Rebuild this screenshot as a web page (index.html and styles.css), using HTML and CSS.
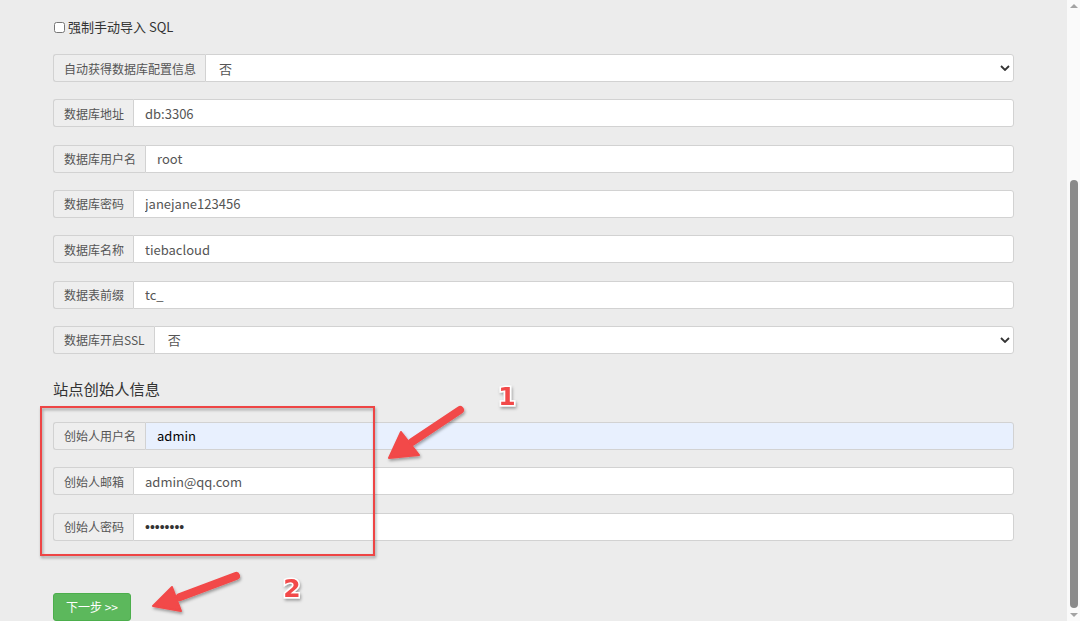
FILE: index.html
```html
<!DOCTYPE html>
<html lang="zh-CN">
<head>
<meta charset="utf-8">
<title>安装</title>
<link rel="stylesheet" href="styles.css">
</head>
<body>
<div class="page">
  <main class="content">
    <label class="check"><input type="checkbox"> 强制手动导入 SQL</label>

    <div class="rows">
      <div class="group">
        <span class="addon">自动获得数据库配置信息</span>
        <select class="field select"><option>否</option></select>
      </div>
      <div class="group">
        <span class="addon">数据库地址</span>
        <input class="field" type="text" value="db:3306">
      </div>
      <div class="group">
        <span class="addon">数据库用户名</span>
        <input class="field" type="text" value="root">
      </div>
      <div class="group">
        <span class="addon">数据库密码</span>
        <input class="field" type="text" value="janejane123456">
      </div>
      <div class="group">
        <span class="addon">数据库名称</span>
        <input class="field" type="text" value="tiebacloud">
      </div>
      <div class="group">
        <span class="addon">数据表前缀</span>
        <input class="field" type="text" value="tc_">
      </div>
      <div class="group">
        <span class="addon">数据库开启SSL</span>
        <select class="field select"><option>否</option></select>
      </div>
    </div>

    <h3 class="heading">站点创始人信息</h3>

    <div class="rows">
      <div class="group">
        <span class="addon">创始人用户名</span>
        <input class="field autofill" type="text" value="admin">
      </div>
      <div class="group">
        <span class="addon">创始人邮箱</span>
        <input class="field" type="text" value="admin@qq.com">
      </div>
      <div class="group">
        <span class="addon">创始人密码</span>
        <input class="field password" type="password" value="12345678">
      </div>
    </div>

    <button class="btn-next" type="button">下一步 &gt;&gt;</button>
  </main>

  <div class="scrollbar">
    <span class="sb-arrow sb-up"></span>
    <span class="sb-space"></span>
    <span class="sb-thumb"></span>
    <span class="sb-arrow sb-down"></span>
  </div>
</div>

<svg class="annot" width="1080" height="621" viewBox="0 0 1080 621" aria-hidden="true">
  <defs>
    <filter id="sh" x="-20%" y="-20%" width="140%" height="140%">
      <feDropShadow dx="1" dy="2" stdDeviation="1.6" flood-color="#000" flood-opacity="0.35"/>
    </filter>
  </defs>
  <rect x="41" y="407" width="333" height="148" fill="none" stroke="#ee4444" stroke-width="2" filter="url(#sh)"/>
  <g filter="url(#sh)" fill="#f24848" stroke="#f24848">
    <line x1="460" y1="410" x2="412" y2="442" stroke-width="8" stroke-linecap="round"/>
    <polygon points="389,458 401,432 419,455" stroke-width="2" stroke-linejoin="round"/>
    <line x1="236" y1="576" x2="180" y2="597" stroke-width="8" stroke-linecap="round"/>
    <polygon points="153,606 172,587 181,611" stroke-width="2" stroke-linejoin="round"/>
  </g>
  <g class="num" filter="url(#sh)">
    <text x="507" y="405">1</text>
    <text x="292" y="597">2</text>
  </g>
</svg>
</body>
</html>
```

FILE: styles.css
```css
html, body {
  margin: 0;
  padding: 0;
  height: 100%;
  overflow: hidden;
}

body {
  background: #ececec;
  font-family: "Noto Sans CJK SC", "Noto Sans", sans-serif;
  color: #333;
  position: relative;
}

.page {
  display: flex;
  height: 621px;
}

.content {
  flex: 1;
  display: flex;
  flex-direction: column;
  align-items: flex-start;
  padding: 17px 53px 0 53px;
  box-sizing: border-box;
  width: 1067px;
}

.check {
  display: flex;
  align-items: center;
  font-size: 13px;
  line-height: 20px;
  color: #333;
  height: 20px;
}

.check input {
  width: 11px;
  height: 11px;
  margin: 0 3px 0 1px;
}

.rows {
  display: flex;
  flex-direction: column;
  gap: 17.33px;
  align-self: stretch;
  width: 961px;
}

.content > .rows:first-of-type {
  margin-top: 17px;
}

.group {
  display: flex;
  height: 28px;
}

.addon {
  display: flex;
  align-items: center;
  padding: 0 9px 0 10px;
  font-size: 12px;
  color: #555;
  background: #eeeeee;
  border: 1px solid #d2d2d2;
  border-right: 0;
  border-radius: 3px 0 0 3px;
  white-space: nowrap;
  box-sizing: border-box;
}

.field {
  flex: 1;
  min-width: 0;
  height: 28px;
  box-sizing: border-box;
  border: 1px solid #d2d2d2;
  border-radius: 0 3px 3px 0;
  background: #fff;
  padding: 0 11px;
  font-family: "Noto Sans CJK SC", "Noto Sans", sans-serif;
  font-size: 13px;
  color: #555;
  outline: none;
}

.select {
  -webkit-appearance: none;
  appearance: none;
  padding-left: 13px;
  background-image: url("data:image/svg+xml;utf8,<svg xmlns='http://www.w3.org/2000/svg' width='10' height='6' viewBox='0 0 10 6'><path d='M1 1 L5 5 L9 1' fill='none' stroke='%23333' stroke-width='1.8'/></svg>");
  background-repeat: no-repeat;
  background-position: right 3px center;
}

.autofill {
  background: #e8f0fe;
  color: #000;
}

.password {
  font-family: "Liberation Sans", Arial, sans-serif;
  font-size: 14px;
  letter-spacing: 0;
  color: #333;
}

.heading {
  margin: 24px 0 24px 0;
  font-size: 15.3px;
  font-weight: normal;
  line-height: 20px;
  color: #333;
}

.btn-next {
  margin-top: 52px;
  height: 28px;
  width: 78px;
  border: 1px solid #4cae4c;
  border-radius: 3px;
  background: #5cb85c;
  color: #fff;
  font-family: "Noto Sans CJK SC", "Noto Sans", sans-serif;
  font-size: 12px;
  padding: 0;
}

.scrollbar {
  width: 13px;
  background: #fafafa;
  display: flex;
  flex-direction: column;
  align-items: center;
}

.sb-arrow {
  width: 0;
  height: 0;
  border-left: 4px solid transparent;
  border-right: 4px solid transparent;
}

.sb-up {
  margin-top: 4px;
  border-bottom: 4px solid #a3a3a3;
}

.sb-space {
  height: 172px;
}

.sb-thumb {
  width: 8px;
  flex: 1;
  background: #8a8a8a;
  border-radius: 4px;
}

.sb-down {
  margin: 5px 0 4px;
  border-top: 4px solid #a3a3a3;
}

.annot {
  position: absolute;
  left: 0;
  top: 0;
  pointer-events: none;
}

.num text {
  font-family: "DejaVu Sans", "Liberation Sans", sans-serif;
  font-weight: bold;
  font-size: 25px;
  fill: #f24848;
  stroke: #ffffff;
  stroke-width: 3px;
  paint-order: stroke;
  text-anchor: middle;
}
```
